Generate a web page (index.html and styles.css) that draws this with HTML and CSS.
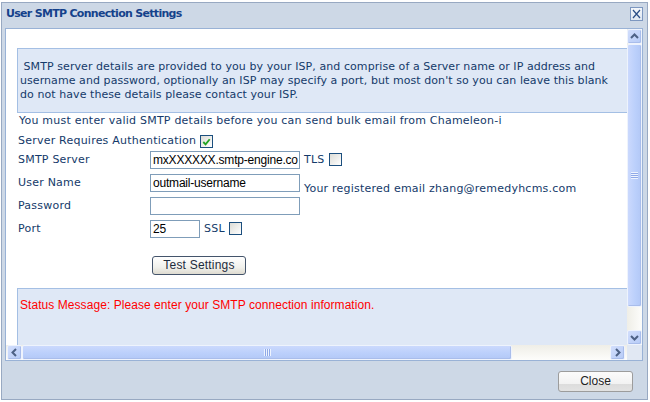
FILE: index.html
```html
<!DOCTYPE html>
<html>
<head>
<meta charset="utf-8">
<link rel="stylesheet" href="styles.css">
</head>
<body>
<div class="dialog">
  <div class="header">
    <span class="title">User SMTP Connection Settings</span>
    <span class="xbtn"><svg width="11" height="12" viewBox="0 0 11 12"><path d="M2 2 L9 10 M9 2 L2 10" stroke="#2a4d86" stroke-width="1.2" fill="none"/></svg></span>
  </div>
  <div class="frame">
    <div class="viewport">
      <div class="page">
        <div class="info">&nbsp;SMTP server details are provided to you by your ISP, and comprise of a Server name or IP address and<br>username and password, optionally an ISP may specify a port, but most don't so you can leave this blank<br>do not have these details please contact your ISP.</div>
        <div class="must">You must enter valid SMTP details before you can send bulk email from Chameleon-i</div>
        <div class="auth">Server Requires Authentication
          <span class="cb checked"><svg width="12" height="12" viewBox="0 0 12 12"><path d="M2.5 6 L5 8.5 L9.5 3" stroke="#22a322" stroke-width="2" fill="none"/></svg></span>
        </div>
        <div class="form">
          <label class="lbl">SMTP Server</label>
          <span class="field"><span class="input">mxXXXXXX.smtp-engine.co</span></span>
          <span class="extra">TLS <span class="cb"></span></span>

          <label class="lbl">User Name</label>
          <span class="field"><span class="input">outmail-username</span></span>
          <span class="extra note">Your registered email zhang@remedyhcms.com</span>

          <label class="lbl">Password</label>
          <span class="field"><span class="input"></span></span>
          <span class="extra"></span>

          <label class="lbl">Port</label>
          <span class="field"><span class="input port">25</span><span class="ssl">SSL <span class="cb"></span></span></span>
          <span class="extra"></span>
        </div>
        <div class="test"><span class="btn">Test Settings</span></div>
        <div class="status">Status Message: Please enter your SMTP connection information.</div>
      </div>
    </div>
    <div class="vscroll">
      <div class="sbtn"><svg width="9" height="7" viewBox="0 0 9 7"><path d="M1 5 L4.5 1.5 L8 5" stroke="#4d6185" stroke-width="2" fill="none"/></svg></div>
      <div class="vthumb"><span class="grip"></span></div>
      <div class="vtrack"></div>
      <div class="sbtn"><svg width="9" height="7" viewBox="0 0 9 7"><path d="M1 2 L4.5 5.5 L8 2" stroke="#4d6185" stroke-width="2" fill="none"/></svg></div>
    </div>
    <div class="hscroll">
      <div class="sbtn"><svg width="7" height="9" viewBox="0 0 7 9"><path d="M5 1 L1.5 4.5 L5 8" stroke="#4d6185" stroke-width="2" fill="none"/></svg></div>
      <div class="hthumb"><span class="grip"></span></div>
      <div class="htrack"></div>
      <div class="sbtn"><svg width="7" height="9" viewBox="0 0 7 9"><path d="M2 1 L5.5 4.5 L2 8" stroke="#4d6185" stroke-width="2" fill="none"/></svg></div>
    </div>
    <div class="corner"></div>
  </div>
  <div class="footer"><span class="closebtn">Close</span></div>
</div>
</body>
</html>
```
FILE: styles.css
```css
html, body {
  margin: 0;
  padding: 0;
}
body {
  width: 650px;
  height: 402px;
  overflow: hidden;
  background: #ffffff;
  font-family: "DejaVu Sans", Verdana, sans-serif;
}
.dialog {
  margin: 2px 0 0 1px;
  width: 645px;
  height: 396px;
  border: 1px solid #98a9c2;
  background: #cdd8e6;
  display: flex;
  flex-direction: column;
}
.header {
  height: 25px;
  display: flex;
  justify-content: space-between;
  align-items: flex-start;
  padding: 0 4px 0 4px;
}
.title {
  font-family: "DejaVu Sans", Tahoma, sans-serif;
  font-weight: bold;
  font-size: 11px;
  color: #15428b;
  line-height: 14px;
  margin-top: 4px;
  letter-spacing: -0.7px;
}
.xbtn {
  margin-top: 4px;
  width: 11px;
  height: 12px;
  border: 1px solid #7d97c0;
  background: linear-gradient(#f4f7fb, #dfe7f2);
  display: flex;
}
.frame {
  margin: 0 4px 0 3px;
  border: 1px solid #99b2d6;
  display: grid;
  grid-template-columns: 621px 15px;
  grid-template-rows: 316px 15px;
  background: #ffffff;
}
.viewport {
  overflow: hidden;
}
.page {
  width: 740px;
  padding: 19px 0 0 11px;
  color: #143a6a;
  font-size: 11px;
  line-height: 14px;
  letter-spacing: 0.22px;
}
.info {
  width: 610px;
  background: #dfe8f6;
  border: 1px solid #a4bfe4;
  padding: 11px 4px 10px 2px;
  white-space: nowrap;
  letter-spacing: 0.07px;
}
.must {
  margin-left: 2px;
  margin-top: 1px;
  white-space: nowrap;
}
.auth {
  margin-left: 1px;
  margin-top: 6px;
  display: flex;
  align-items: center;
  gap: 4px;
}
.cb {
  display: inline-block;
  width: 11px;
  height: 11px;
  border: 1px solid #1c4f7e;
  background: linear-gradient(135deg, #dcdcd6, #ffffff);
  vertical-align: middle;
}
.cb.checked {
  display: inline-flex;
}
.form {
  margin-top: 0;
  margin-left: 1px;
  display: grid;
  grid-template-columns: 132px 150px auto;
  grid-auto-rows: 23px;
}
.lbl {
  align-self: center;
}
.field {
  display: flex;
  align-items: center;
  gap: 4px;
}
.input {
  box-sizing: border-box;
  width: 150px;
  height: 18px;
  border: 1px solid #7f9db9;
  background: #fff;
  font-family: "Liberation Sans", Arial, sans-serif;
  font-size: 12px;
  letter-spacing: -0.2px;
  line-height: 16px;
  color: #000;
  padding-left: 2px;
  overflow: hidden;
  white-space: nowrap;
}
.input.port {
  width: 50px;
}
.ssl {
  display: flex;
  align-items: center;
  gap: 4px;
}
.extra {
  padding-left: 4px;
  display: flex;
  align-items: center;
  gap: 4px;
}
.extra.note {
  align-items: flex-start;
  padding-top: 11px;
  white-space: nowrap;
}
.test {
  margin-top: 16px;
  padding-left: 135px;
}
.btn {
  display: inline-block;
  box-sizing: border-box;
  width: 94px;
  height: 19px;
  border: 1px solid #44546b;
  border-radius: 3px;
  background: linear-gradient(#ffffff, #f1f1ec 60%, #dedbd0);
  text-align: center;
  font-family: "Liberation Sans", Tahoma, sans-serif;
  font-size: 12px;
  letter-spacing: 0.2px;
  line-height: 17px;
  color: #1d2b3c;
}
.status {
  margin-top: 13px;
  width: 640px;
  height: 80px;
  background: #dfe8f6;
  border: 1px solid #a4bfe4;
  padding: 9px 0 0 2px;
  color: #ff0000;
  font-family: "Liberation Sans", Arial, sans-serif;
  font-size: 12px;
  letter-spacing: 0.06px;
  line-height: 14px;
  white-space: nowrap;
}
.vscroll {
  display: grid;
  grid-template-rows: 15px 263px 23px 15px;
  background: linear-gradient(90deg, #efeee7, #fdfdfb);
}
.hscroll {
  display: grid;
  grid-template-columns: 15px 490px 98px 15px;
  padding-left: 1px;
  background: linear-gradient(#efeee7, #fdfdfb);
}
.sbtn {
  box-sizing: border-box;
  border: 1px solid #eef3fd;
  border-radius: 2px;
  background: linear-gradient(135deg, #d2defc, #b6cbf7);
  box-shadow: inset -1px -1px 0 #a9bdeb;
  display: flex;
  align-items: center;
  justify-content: center;
}
.vthumb {
  box-sizing: border-box;
  border: 1px solid #eef3fd;
  border-radius: 2px;
  background: linear-gradient(90deg, #cbd9fd, #bacffb 60%, #b3c8f6);
  box-shadow: inset -1px -1px 0 #a9bdeb;
  display: flex;
  align-items: center;
  justify-content: center;
}
.hthumb {
  box-sizing: border-box;
  border: 1px solid #eef3fd;
  border-radius: 2px;
  background: linear-gradient(#cbd9fd, #bacffb 60%, #b3c8f6);
  box-shadow: inset -1px -1px 0 #a9bdeb;
  display: flex;
  align-items: center;
  justify-content: center;
}
.vthumb .grip {
  width: 7px;
  height: 7px;
  background: repeating-linear-gradient(#eef4fe 0 1px, #8fa9e8 1px 2px);
}
.hthumb .grip {
  width: 7px;
  height: 7px;
  background: repeating-linear-gradient(90deg, #eef4fe 0 1px, #8fa9e8 1px 2px);
}
.corner {
  background: #e1e8f3;
}
.footer {
  flex: 1;
  display: flex;
  justify-content: flex-end;
  align-items: flex-start;
  padding: 10px 14px 0 0;
}
.closebtn {
  box-sizing: border-box;
  width: 75px;
  height: 21px;
  border: 1px solid #9c9c9c;
  border-radius: 3px;
  background: linear-gradient(#fbfbfb, #f2f2f2 62%, #dcdcdc 63%, #e2e2e2);
  text-align: center;
  font-family: "Liberation Sans", Tahoma, sans-serif;
  font-size: 12px;
  line-height: 19px;
  color: #222;
}
```
